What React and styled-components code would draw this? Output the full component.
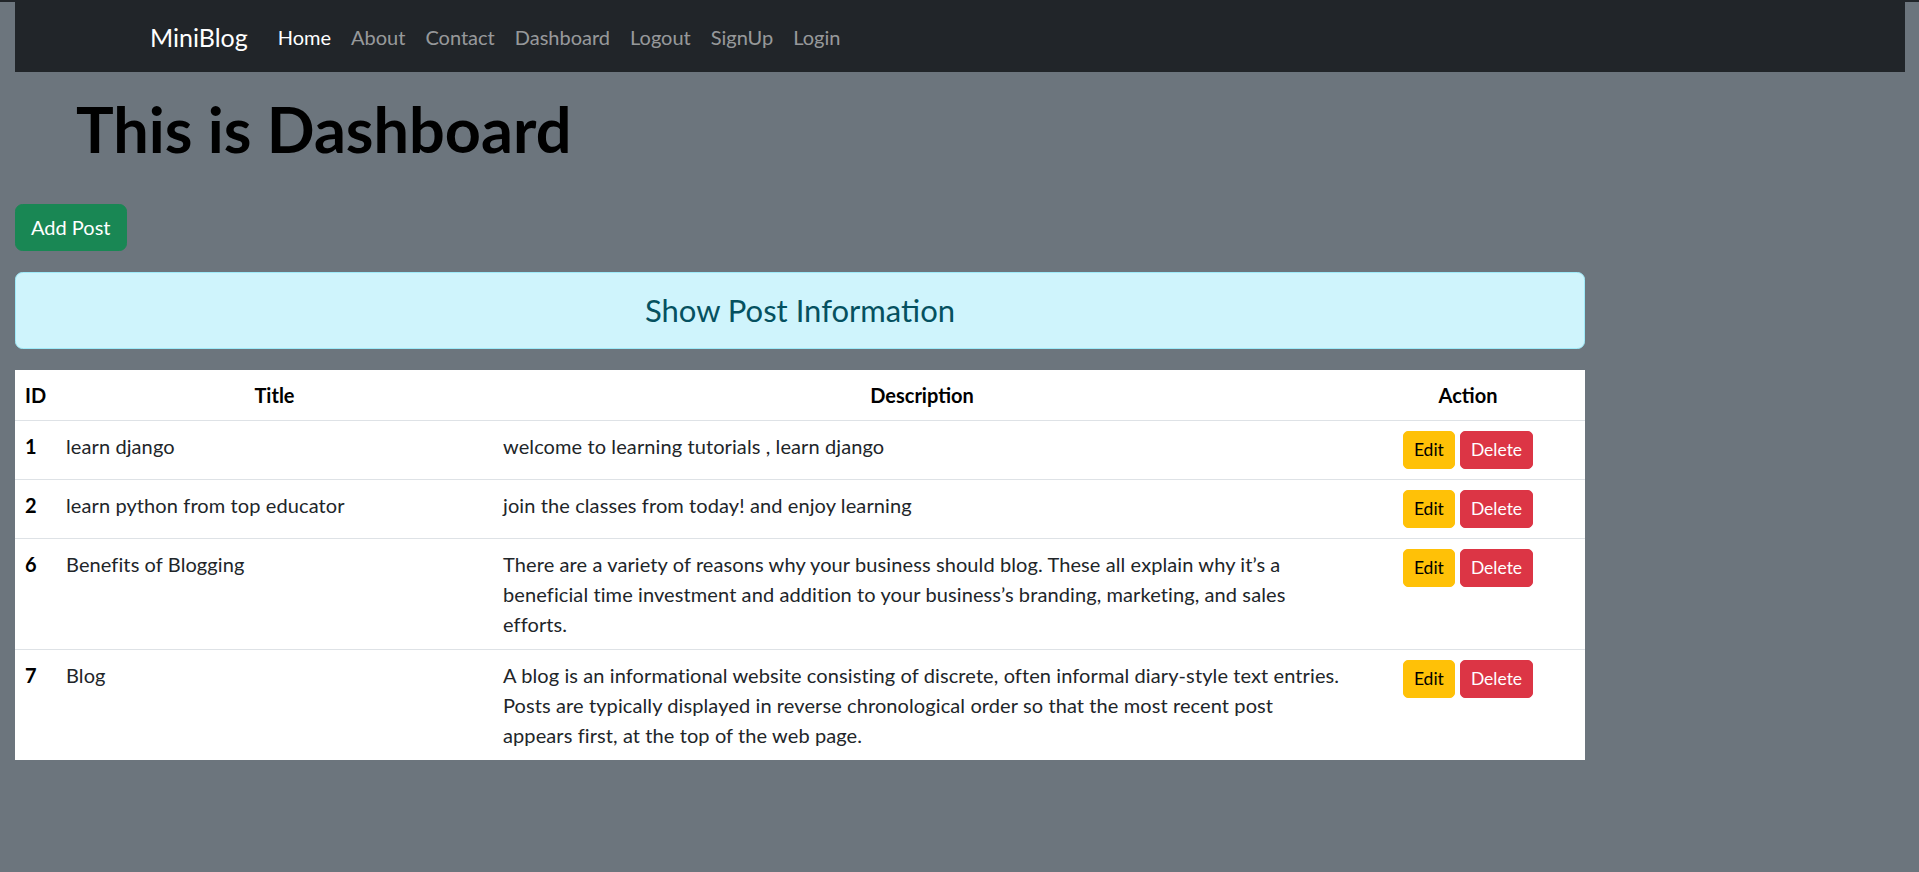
import React from 'react'
import styled, { createGlobalStyle } from 'styled-components'

const GlobalStyle = createGlobalStyle`
  body {
    margin: 0;
    border-top: 2px solid #212529;
    background-color: #6c757d;
    font-family: Lato, "Noto Sans", sans-serif;
    color: #212529;
  }
`;

const Page = styled.div`
  padding: 0 14px 40px 15px;
`;

const Navbar = styled.nav`
  height: 70px;
  background-color: #212529;
  display: flex;
  align-items: center;
  padding-left: 135px;
`;

const Brand = styled.a`
  font-size: 25px;
  color: #fff;
  margin-right: 20px;
  text-decoration: none;
`;

const NavLink = styled.a`
  font-size: 20px;
  padding: 0 10px;
  color: ${(p) => (p.$active ? '#fff' : 'rgba(255, 255, 255, 0.55)')};
  text-decoration: none;
`;

const Content = styled.main`
  width: 1570px;
`;

const Heading = styled.h1`
  font-size: 63px;
  font-weight: 700;
  color: #000;
  margin: 19px 0 37px 0;
  padding-left: 61px;
  line-height: 1.2;
`;

const Button = styled.button`
  font-family: inherit;
  border: 1px solid ${(p) => p.$bg};
  background-color: ${(p) => p.$bg};
  color: ${(p) => p.$color};
  font-size: ${(p) => (p.$small ? '17.5px' : '20px')};
  line-height: 1.5;
  padding: ${(p) => (p.$small ? '5px 10px' : '7.5px 15px')};
  border-radius: ${(p) => (p.$small ? '5px' : '7.5px')};
  cursor: pointer;
`;

const Alert = styled.div`
  margin-top: 21px;
  background-color: #cff4fc;
  border: 1px solid #9eeaf9;
  border-radius: 7.5px;
  padding: 15px 20px;
  text-align: center;
  color: #055160;
  font-size: 31px;
  line-height: 45px;
`;

const Table = styled.table`
  margin-top: 21px;
  width: 100%;
  background-color: #fff;
  border-collapse: collapse;
  table-layout: fixed;
  font-size: 20px;
  line-height: 30px;
`;

const Th = styled.th`
  padding: 10px;
  text-align: ${(p) => (p.$center ? 'center' : 'left')};
  font-weight: 700;
  color: #000;
  border-bottom: 1px solid #dee2e6;
`;

const Td = styled.td`
  padding: 10px;
  vertical-align: top;
  letter-spacing: 0.1px;
  text-align: ${(p) => (p.$center ? 'center' : 'left')};
  font-weight: ${(p) => (p.$bold ? 700 : 400)};
  color: ${(p) => (p.$bold ? '#000' : '#212529')};
  border-bottom: ${(p) => (p.$last ? 'none' : '1px solid #dee2e6')};
`;

const Actions = styled.div`
  display: flex;
  justify-content: center;
  gap: 5px;
`;

const links = ['Home', 'About', 'Contact', 'Dashboard', 'Logout', 'SignUp', 'Login'];

const posts = [
  { id: 1, title: 'learn django', desc: 'welcome to learning tutorials , learn django' },
  { id: 2, title: 'learn python from top educator', desc: 'join the classes from today! and enjoy learning' },
  {
    id: 6,
    title: 'Benefits of Blogging',
    desc: 'There are a variety of reasons why your business should blog. These all explain why it\u2019s a beneficial time investment and addition to your business\u2019s branding, marketing, and sales efforts.',
  },
  {
    id: 7,
    title: 'Blog',
    desc: 'A blog is an informational website consisting of discrete, often informal diary-style text entries. Posts are typically displayed in reverse chronological order so that the most recent post appears first, at the top of the web page.',
  },
];

const App = () => {
  return (
    <>
      <GlobalStyle />
      <Page>
        <Navbar>
          <Brand href="#">MiniBlog</Brand>
          {links.map((l, i) => (
            <NavLink key={l} href="#" $active={i === 0}>{l}</NavLink>
          ))}
        </Navbar>
        <Content>
          <Heading>This is Dashboard</Heading>
          <Button $bg="#198754" $color="#fff">Add Post</Button>
          <Alert>Show Post Information</Alert>
          <Table>
            <colgroup>
              <col style={{ width: 41 }} />
              <col style={{ width: 437 }} />
              <col style={{ width: 858 }} />
              <col style={{ width: 234 }} />
            </colgroup>
            <thead>
              <tr>
                <Th>ID</Th>
                <Th $center>Title</Th>
                <Th $center>Description</Th>
                <Th $center>Action</Th>
              </tr>
            </thead>
            <tbody>
              {posts.map((p, i) => (
                <tr key={p.id}>
                  <Td $bold $last={i === posts.length - 1}>{p.id}</Td>
                  <Td $last={i === posts.length - 1}>{p.title}</Td>
                  <Td $last={i === posts.length - 1}>{p.desc}</Td>
                  <Td $center $last={i === posts.length - 1}>
                    <Actions>
                      <Button $small $bg="#ffc107" $color="#000">Edit</Button>
                      <Button $small $bg="#dc3545" $color="#fff">Delete</Button>
                    </Actions>
                  </Td>
                </tr>
              ))}
            </tbody>
          </Table>
        </Content>
      </Page>
    </>
  )
}

export default App
